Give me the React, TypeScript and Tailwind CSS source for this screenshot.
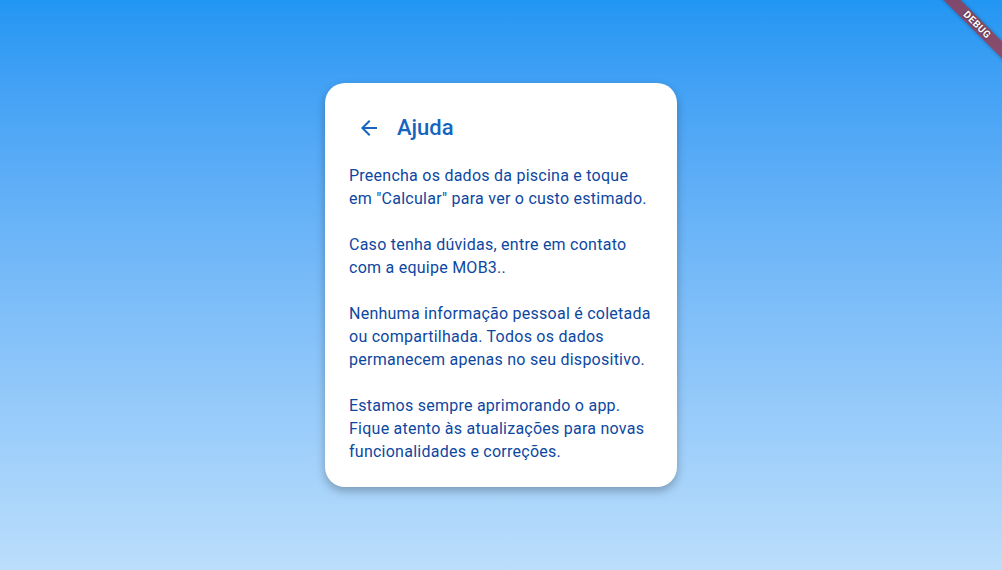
import React from "react";

export default function App() {
  const paragraphs = [
    'Preencha os dados da piscina e toque em "Calcular" para ver o custo estimado.',
    "Caso tenha dúvidas, entre em contato com a equipe MOB3..",
    "Nenhuma informação pessoal é coletada ou compartilhada. Todos os dados permanecem apenas no seu dispositivo.",
    "Estamos sempre aprimorando o app. Fique atento às atualizações para novas funcionalidades e correções.",
  ];
  return (
    <div
      className="relative w-full h-[570px] overflow-hidden flex items-center justify-center bg-gradient-to-b from-[#2196F3] to-[#BBDEFB]"
      style={{ fontFamily: "Roboto, 'Noto Sans', sans-serif" }}
    >
      <div className="w-[352px] bg-white rounded-[20px] shadow-[0_4px_10px_rgba(0,0,0,0.28)] px-6 pt-[25px] pb-6">
        <div className="h-10 flex items-center">
          <div className="w-10 h-10 flex items-center justify-center">
            <svg width="24" height="24" viewBox="0 0 24 24" fill="#1565C0">
              <path d="M20 11H7.83l5.59-5.59L12 4l-8 8 8 8 1.41-1.41L7.83 13H20v-2z" />
            </svg>
          </div>
          <span className="ml-2 text-[22px] font-medium text-[#1565C0] leading-none">Ajuda</span>
        </div>
        <div className="mt-[16px] text-[16px] leading-[23px] tracking-[0.25px] text-[#0D47A1] flex flex-col gap-[23px]">
          {paragraphs.map((p, i) => (
            <p key={i}>{p}</p>
          ))}
        </div>
      </div>
      <div className="absolute left-[917px] top-[19px] w-[120px] h-[12px] rotate-45 bg-[rgba(183,28,28,0.63)] flex items-center justify-center shadow-[0_0_4px_rgba(0,0,0,0.3)]">
        <span
          className="text-white text-[10px] font-bold leading-none tracking-[0.5px]"
          style={{ textShadow: "0 0 2px rgba(0,0,0,0.6)" }}
        >
          DEBUG
        </span>
      </div>
    </div>
  );
}
